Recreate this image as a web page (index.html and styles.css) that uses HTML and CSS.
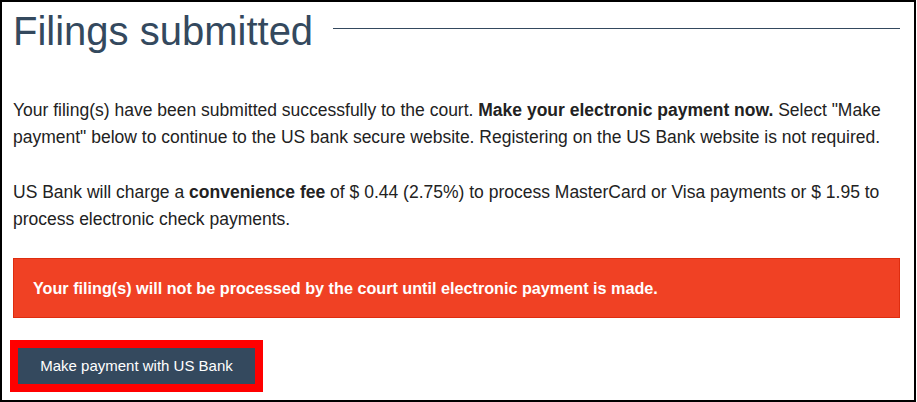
FILE: index.html
```html
<!DOCTYPE html>
<html lang="en">
<head>
<meta charset="utf-8">
<title>Filings submitted</title>
<link rel="stylesheet" href="styles.css">
</head>
<body>
<div class="frame">
  <div class="header">
    <h1 class="title">Filings submitted</h1>
    <div class="rule"></div>
  </div>
  <p class="text">Your filing(s) have been submitted successfully to the court. <strong>Make your electronic payment now.</strong> Select "Make payment" below to continue to the US bank secure website. Registering on the US Bank website is not required.</p>
  <p class="text">US Bank will charge a <strong>convenience fee</strong> of $ 0.44 (2.75%) to process MasterCard or Visa payments or $ 1.95 to process electronic check payments.</p>
  <div class="alert">Your filing(s) will not be processed by the court until electronic payment is made.</div>
  <div class="btn-highlight">
    <button class="btn" type="button">Make payment with US Bank</button>
  </div>
</div>
</body>
</html>
```

FILE: styles.css
```css
html, body {
  margin: 0;
  padding: 0;
  background: #fff;
}
body {
  font-family: "Liberation Sans", Arial, sans-serif;
  color: #222;
}
.frame {
  box-sizing: border-box;
  width: 916px;
  height: 402px;
  border: 2px solid #000;
  padding: 6px 14px 0 11px;
  overflow: hidden;
}
.header {
  display: flex;
  align-items: center;
}
.title {
  margin: 0;
  font-size: 40px;
  font-weight: normal;
  line-height: 46px;
  color: #34495e;
}
.rule {
  flex: 1;
  height: 0;
  border-top: 1px solid #34495e;
  margin: 0 0 6px 20px;
}
.text {
  margin: 43px 0 0 0;
  font-size: 17.5px;
  line-height: 27.3px;
}
.text + .text {
  margin-top: 27px;
}
.alert {
  margin-top: 25px;
  background: #f04124;
  border: 1px solid #de2d0f;
  color: #fff;
  font-weight: bold;
  font-size: 16.2px;
  line-height: 20px;
  padding: 19px 19px;
}
.btn-highlight {
  display: inline-block;
  margin: 22px 0 0 -3px;
  border: 8px solid #ff0000;
  line-height: 0;
}
.btn {
  display: block;
  width: 237px;
  height: 36px;
  margin: 0;
  padding: 0;
  border: none;
  background: #34495e;
  color: #fff;
  font-family: "Liberation Sans", Arial, sans-serif;
  font-size: 15px;
  line-height: 36px;
}
```
